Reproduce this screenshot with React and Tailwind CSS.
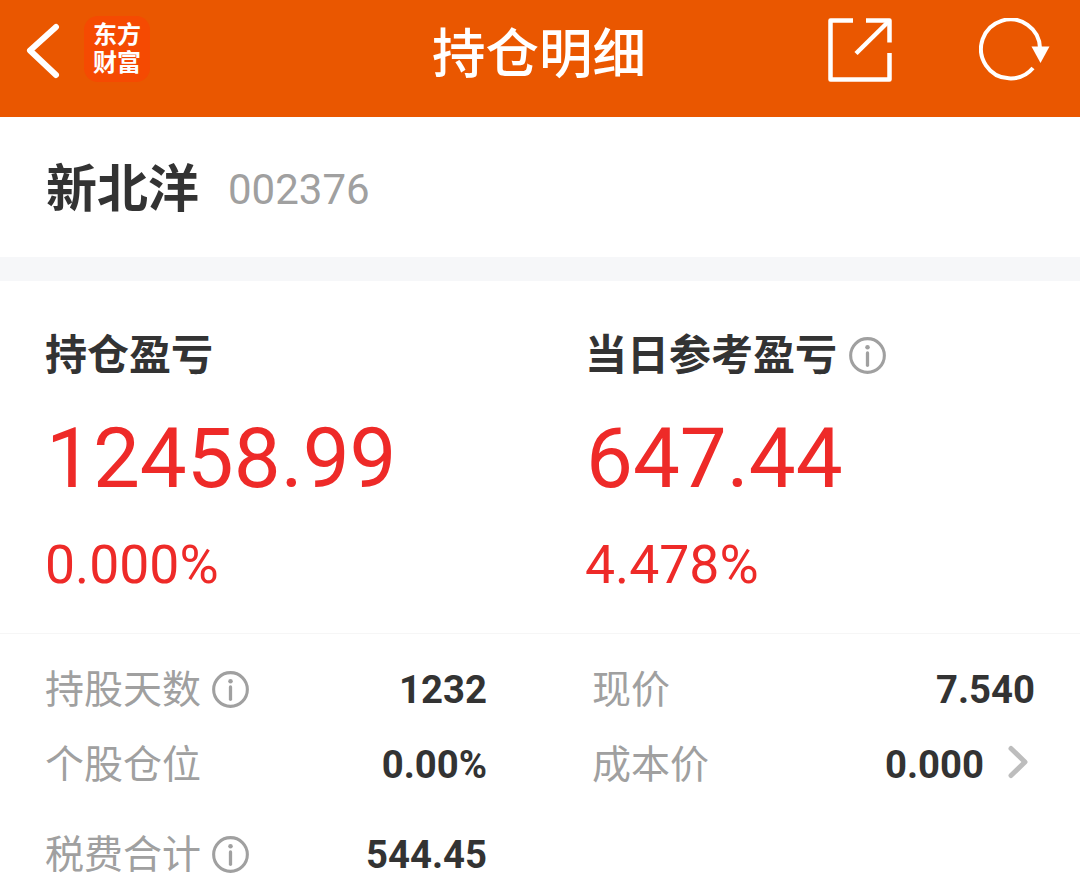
const FONT = "font-['Roboto','Noto_Sans_CJK_SC',sans-serif]";

const InfoIcon = ({ className }) => (
  <svg viewBox="0 0 36 36" className={className} fill="none" stroke="#a0a0a0">
    <circle cx="18" cy="18" r="16.400" strokeWidth="3" />
    <circle cx="18" cy="10" r="2.200" fill="#a0a0a0" stroke="none" />
    <path d="M18 15.500v12" strokeWidth="3.200" strokeLinecap="round" />
  </svg>
);

const Header = () => (
  <div className="h-[117px] bg-[#ea5700] flex items-center relative">
    <svg viewBox="0 0 36 56" className="w-[36px] h-[56px] ml-[25px] mt-[-16px]" fill="none" stroke="#fff" strokeWidth="6" strokeLinecap="round" strokeLinejoin="round">
      <path d="M31 4 L5 27.500 L31 52" />
    </svg>
    <div className="w-[66px] h-[66px] ml-[23px] mt-[-19px] pb-[4px] rounded-[14px] bg-[#f54a02] flex items-center justify-center text-center text-white text-[24px] leading-[28px] font-['Noto_Sans_CJK_SC',sans-serif] font-bold">
      <span>东方<br />财富</span>
    </div>
    <div className="absolute left-0 right-[2px] top-[23px] text-center text-white text-[53.500px] leading-[64px] font-medium">持仓明细</div>
    <svg viewBox="0 0 64 64" className="w-[64px] h-[64px] ml-auto mr-[87px] mt-[-17px]" fill="none" stroke="#fff" strokeWidth="4.500" strokeLinejoin="round" strokeLinecap="butt">
      <path d="M25 2.500 H2.500 V61.500 H61.500 V35" />
      <path d="M38 2.500 H61.500 V24.500" />
      <path d="M28 35.500 L60 4" />
    </svg>
    <svg viewBox="0 0 72 64" className="w-[72px] h-[64px] mr-[29px] mt-[-17px]" fill="none">
      <path d="M54 50 A29.500 29.500 0 1 1 61 30" stroke="#fff" strokeWidth="4" />
      <path d="M52.500 28.500 H70.500 L61.500 45 Z" fill="#fff" />
    </svg>
  </div>
);

const Stat = ({ title, value, pct, info }) => (
  <div className="pl-[46px]">
    <div className="flex items-center h-[50px]">
      <span className="text-[42px] leading-[50px] font-bold text-[#333] ml-[-1px]">{title}</span>
      {info && <InfoIcon className="w-[37px] h-[37px] ml-[12px] mt-[-2px]" />}
    </div>
    <div className="text-[83.500px] leading-[96px] text-[#ee2a28] mt-[30px]">{value}</div>
    <div className="text-[53.500px] leading-[60px] text-[#ee2a28] mt-[28px] ml-[-1px]">{pct}</div>
  </div>
);

const Row = ({ label, value, info, arrow, className }) => (
  <div className={`flex items-center h-[44px] ${className || ''}`}>
    <span className="text-[39px] leading-[44px] text-[#a0a0a0]">{label}</span>
    {info && <InfoIcon className="w-[37px] h-[37px] ml-[11px] mt-[-2px]" />}
    <span className="ml-auto text-[38.300px] leading-[44px] font-bold text-[#333]">{value}</span>
    {arrow && (
      <svg viewBox="0 0 24 36" className="w-[24px] h-[36px] ml-[22px] mr-[5px] mt-[-6px]" fill="none" stroke="#bdbdbd" strokeWidth="5" strokeLinecap="round" strokeLinejoin="round">
        <path d="M5 4.500 L19 18 L5 31.500" />
      </svg>
    )}
  </div>
);

export default function App() {
  return (
    <div className={`w-[1080px] h-[890px] overflow-hidden bg-white ${FONT}`}>
      <Header />
      <div className="h-[140px] flex items-center pl-[46px] pt-[5px]">
        <span className="text-[51px] leading-[60px] font-bold text-[#333]">新北洋</span>
        <span className="text-[42px] leading-[48px] text-[#a0a0a0] ml-[29px]">002376</span>
      </div>
      <div className="h-[24px] bg-[#f6f7f9]" />
      <div className="h-[353px] border-b border-[#f6f6f6] grid grid-cols-2 pt-[50px]">
        <Stat title="持仓盈亏" value="12458.99" pct="0.000%" />
        <Stat title="当日参考盈亏" value="647.44" pct="4.478%" info />
      </div>
      <div className="grid grid-cols-[442px_443px] gap-x-[105px] pl-[45px] pt-[34px]">
        <Row label="持股天数" value="1232" info />
        <Row label="现价" value="7.540" />
        <Row label="个股仓位" value="0.00%" className="mt-[31px]" />
        <Row label="成本价" value="0.000" arrow className="mt-[31px]" />
        <Row label="税费合计" value="544.45" info className="mt-[46px]" />
      </div>
    </div>
  );
}
